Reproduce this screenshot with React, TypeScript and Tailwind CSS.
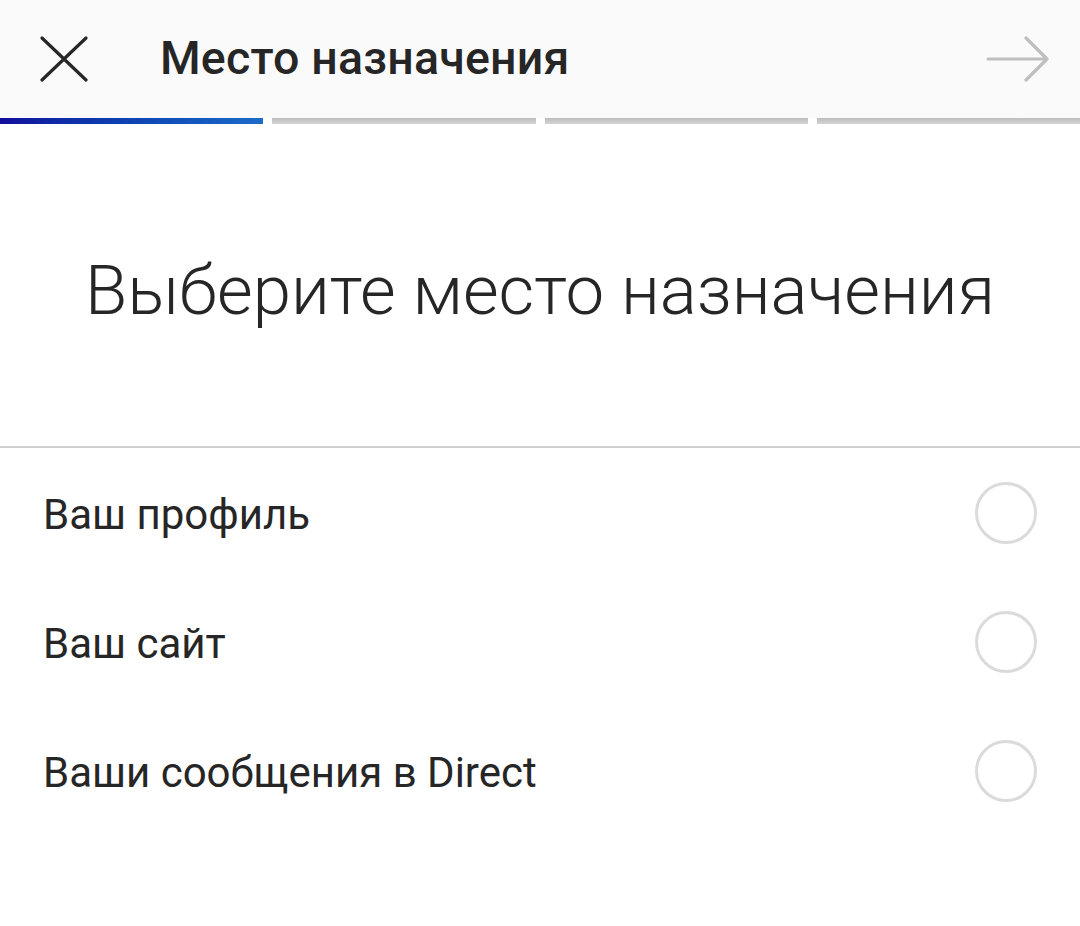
import React from "react";

const items = ["Ваш профиль", "Ваш сайт", "Ваши сообщения в Direct"];

export default function App() {
  return (
    <div className="w-[1080px] h-[926px] bg-white overflow-hidden" style={{ fontFamily: "Roboto, 'Noto Sans', sans-serif" }}>
      <div className="h-[118px] bg-[#fafafa] flex items-center">
        <div className="w-[160px] flex items-center pl-[40px]">
          <svg width="48" height="46" viewBox="0 0 48 46" fill="none">
            <path d="M2 2 L46 44 M46 2 L2 44" stroke="#262626" strokeWidth="3.2" strokeLinecap="round" />
          </svg>
        </div>
        <div className="flex-1 text-[46.5px] font-medium text-[#262626] leading-none tracking-[0.2px] pb-[2px]">Место назначения</div>
        <div className="pr-[30px] flex items-center">
          <svg width="64" height="48" viewBox="0 0 64 48" fill="none">
            <path d="M2 24 L61 24 M40 3 L61 24 L40 45" stroke="#bfbfbf" strokeWidth="3.2" strokeLinecap="round" strokeLinejoin="round" />
          </svg>
        </div>
      </div>
      <div className="flex gap-[9px] h-[6px]">
        <div className="flex-1 bg-gradient-to-r from-[#120c9c] to-[#1d6bc8]" />
        <div className="flex-1 bg-gradient-to-b from-[#bdbdbd] to-[#d4d4d4]" />
        <div className="flex-1 bg-gradient-to-b from-[#bdbdbd] to-[#d4d4d4]" />
        <div className="flex-1 bg-gradient-to-b from-[#bdbdbd] to-[#d4d4d4]" />
      </div>
      <div className="h-[322px] flex items-center justify-center">
        <div className="text-[69px] font-light text-[#262626] leading-none pt-[10px]">Выберите место назначения</div>
      </div>
      <div className="h-[2px] bg-[#d0d0d0]" />
      <div>
        {items.map((t) => (
          <div key={t} className="h-[129px] flex items-center justify-between pl-[43px] pr-[43px]">
            <div className="text-[42px] text-[#262626] leading-none pt-[4px]">{t}</div>
            <div className="w-[62px] h-[62px] rounded-full border-[3px] border-[#dbdbdb]" />
          </div>
        ))}
      </div>
    </div>
  );
}
